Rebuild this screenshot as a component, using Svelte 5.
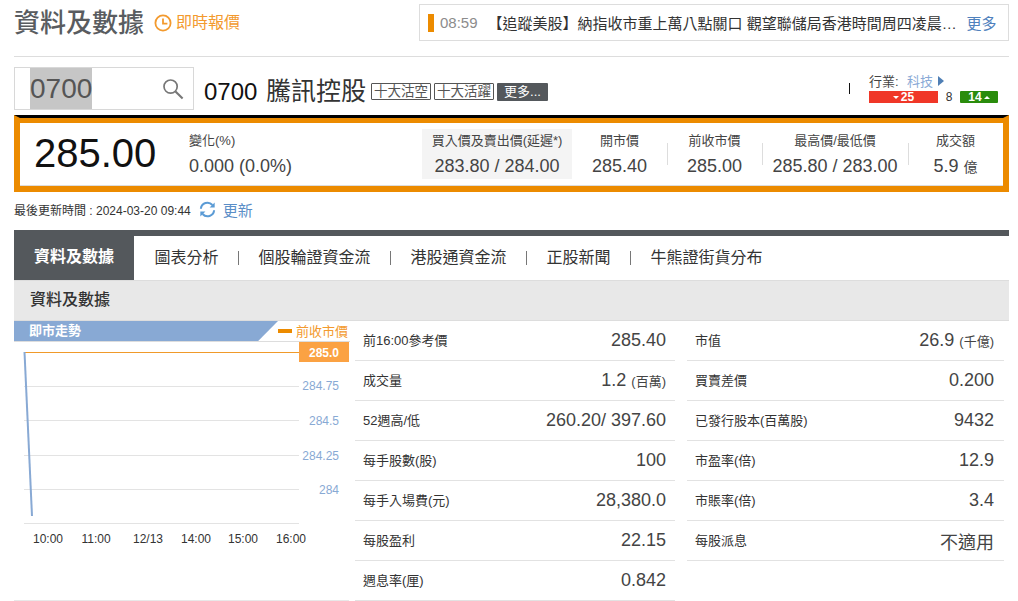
<script>
  const tabs = ['圖表分析', '個股輪證資金流', '港股通資金流', '正股新聞', '牛熊證街貨分布'];
  const leftRows = [
    ['前16:00參考價', '285.40', ''],
    ['成交量', '1.2', '(百萬)'],
    ['52週高/低', '260.20/ 397.60', ''],
    ['每手股數(股)', '100', ''],
    ['每手入場費(元)', '28,380.0', ''],
    ['每股盈利', '22.15', ''],
    ['週息率(厘)', '0.842', '']
  ];
  const rightRows = [
    ['市值', '26.9', '(千億)'],
    ['買賣差價', '0.200', ''],
    ['已發行股本(百萬股)', '9432', ''],
    ['市盈率(倍)', '12.9', ''],
    ['市賬率(倍)', '3.4', ''],
    ['每股派息', '不適用', '']
  ];
  const quotes = [
    { label: '開市價', value: '285.40', cls: 'q-open' },
    { label: '前收市價', value: '285.00', cls: 'q-prev' },
    { label: '最高價/最低價', value: '285.80 / 283.00', cls: 'q-high' }
  ];
  const grid = [386, 420, 455, 489, 523];
  const yLabels = [['284.75', 390], ['284.5', 425], ['284.25', 460], ['284', 494]];
  const xLabels = [['10:00', 48], ['11:00', 96], ['12/13', 148], ['14:00', 196], ['15:00', 243], ['16:00', 291]];
</script>

<div class="page">
  <header class="top">
    <h1>資料及數據</h1>
    <svg class="clock" viewBox="0 0 18 18" width="18" height="18" aria-hidden="true">
      <circle cx="9" cy="9" r="7.6" fill="none" stroke="#f39a2e" stroke-width="1.8" />
      <path d="M9 4.6V9.6H13.4" fill="none" stroke="#f39a2e" stroke-width="1.8" />
    </svg>
    <span class="realtime">即時報價</span>
    <div class="ticker">
      <i class="tick-bar"></i>
      <span class="tick-time">08:59</span>
      <span class="tick-text">【追蹤美股】納指收市重上萬八點關口 觀望聯儲局香港時間周四凌晨…</span>
      <span class="tick-more">更多</span>
    </div>
  </header>

  <section class="search-row">
    <div class="search">
      <span class="code">0700</span>
      <svg viewBox="0 0 22 22" width="22" height="22" aria-hidden="true">
        <circle cx="8.6" cy="8.6" r="6.6" fill="none" stroke="#777" stroke-width="1.7" />
        <path d="M13.5 13.5L20.6 20.6" stroke="#777" stroke-width="2.1" />
      </svg>
    </div>
    <div class="name"><b>0700</b> <span>騰訊控股</span></div>
    <span class="tag">十大沽空</span>
    <span class="tag">十大活躍</span>
    <span class="tag-more">更多...</span>
    <i class="pipe"></i>
    <div class="industry">
      <div class="ind-top">
        <span class="ind-label">行業:</span><span class="ind-name">科技</span><i class="ind-arrow"></i>
      </div>
      <div class="ind-bars">
        <span class="bar-red"><i class="tri-down"></i>25</span>
        <span class="bar-mid">8</span>
        <span class="bar-green">14<i class="tri-up"></i></span>
      </div>
    </div>
  </section>

  <section class="quote">
    <div class="price">285.00</div>
    <div class="change">
      <div class="q-label">變化(%)</div>
      <div class="q-value">0.000 (0.0%)</div>
    </div>
    <div class="q-cell q-bid">
      <div class="q-label">買入價及賣出價(延遲*)</div>
      <div class="q-value">283.80 / 284.00</div>
    </div>
    {#each quotes as q}
      <div class="q-cell {q.cls}">
        <div class="q-label">{q.label}</div>
        <div class="q-value">{q.value}</div>
      </div>
    {/each}
    <div class="q-cell q-vol">
      <div class="q-label">成交額</div>
      <div class="q-value">5.9 <small>億</small></div>
    </div>
  </section>

  <div class="updated">
    <span>最後更新時間 : 2024-03-20 09:44</span>
    <svg viewBox="0 0 18 18" width="17" height="17" aria-hidden="true">
      <path d="M2 8.2A7 7 0 0 1 14.2 4.2" fill="none" stroke="#5b9bd5" stroke-width="2.2" />
      <path d="M16 9.8A7 7 0 0 1 3.8 13.8" fill="none" stroke="#5b9bd5" stroke-width="2.2" />
      <path d="M16.6 1.6V7H11.2Z M1.4 16.4V11H6.8Z" fill="#5b9bd5" />
    </svg>
    <span class="refresh">更新</span>
  </div>

  <nav class="tabs">
    <span class="tab-active">資料及數據</span>
    {#each tabs as t, i}
      <span class="tab" class:first={i === 0} class:last={i === tabs.length - 1}>{t}</span>
    {/each}
  </nav>

  <div class="section-title">資料及數據</div>

  <div class="content">
    <div class="chart">
      <div class="chart-head">
        <span class="chart-title">即市走勢</span>
        <span class="legend"><i></i>前收市價</span>
      </div>
      <svg class="plot" viewBox="14 342 336 259" width="336" height="259" aria-hidden="true">
        {#each grid as y}
          <line x1="24" x2="299" y1={y + 0.5} y2={y + 0.5} stroke="#e3e3e3" />
        {/each}
        <line x1="24" x2="300" y1="352.5" y2="352.5" stroke="#f09a2a" />
        <line x1="24.5" x2="32" y1="352" y2="516" stroke="#88a9d4" stroke-width="2" />
        <rect x="299" y="342" width="50" height="20" fill="#fba243" />
        <text x="339" y="357" text-anchor="end" class="tag-text">285.0</text>
        {#each yLabels as [l, y]}
          <text x="339" {y} text-anchor="end" class="y-text">{l}</text>
        {/each}
        {#each xLabels as [l, x]}
          <text {x} y="543" text-anchor="middle" class="x-text">{l}</text>
        {/each}
        <line x1="14" x2="349" y1="600.5" y2="600.5" stroke="#e8e8e8" />
      </svg>
    </div>
    <div class="table">
      <div class="col">
        {#each leftRows as [l, v, u]}
          <div class="row"><span class="r-label">{l}</span><span class="r-value">{v}{#if u}<small>{u}</small>{/if}</span></div>
        {/each}
      </div>
      <div class="col col-right">
        {#each rightRows as [l, v, u]}
          <div class="row"><span class="r-label">{l}</span><span class="r-value">{v}{#if u}<small>{u}</small>{/if}</span></div>
        {/each}
      </div>
    </div>
  </div>
</div>

<style>
  :global(body) {
    margin: 0;
    background: #fff;
    overflow: hidden;
  }
  .page {
    width: 995px;
    height: 601px;
    margin-left: 14px;
    overflow: hidden;
    font-family: "Liberation Sans", "Noto Sans CJK TC", sans-serif;
    color: #333;
  }
  .top {
    height: 56px;
    box-sizing: content-box;
    border-bottom: 1px solid #ddd;
    display: flex;
    align-items: flex-start;
  }
  h1 {
    margin: 6px 0 0;
    font-size: 26px;
    line-height: 35px;
    font-weight: 500;
    color: #595c60;
    width: 140px;
    white-space: nowrap;
  }
  .clock {
    margin-top: 14px;
  }
  .realtime {
    margin: 11px 0 0 4px;
    font-size: 16px;
    line-height: 24px;
    color: #f39a2e;
    width: 243px;
  }
  .ticker {
    width: 590px;
    height: 37px;
    margin-top: 4px;
    box-sizing: border-box;
    border: 1px solid #ddd;
    display: flex;
    align-items: center;
    padding-left: 8px;
  }
  .tick-bar {
    width: 6px;
    height: 18px;
    background: #ec8b00;
    flex: none;
  }
  .tick-time {
    margin-left: 6px;
    font-size: 15px;
    color: #8c8c8c;
    flex: none;
  }
  .tick-text {
    margin-left: 10px;
    width: 470px;
    font-size: 15px;
    color: #333;
    white-space: nowrap;
    flex: none;
  }
  .tick-more {
    margin-left: 9px;
    font-size: 15px;
    color: #4f81bd;
    flex: none;
  }
  .search-row {
    height: 58px;
    display: flex;
    align-items: flex-start;
  }
  .search {
    margin-top: 10px;
    width: 180px;
    height: 43px;
    box-sizing: border-box;
    border: 1px solid #d8d8d8;
    display: flex;
    align-items: center;
    padding-left: 15px;
  }
  .code {
    background: #c6c6c6;
    color: #555;
    font-size: 28px;
    line-height: 41px;
    width: 62px;
    flex: none;
  }
  .search svg {
    margin-left: 70px;
    flex: none;
  }
  .name {
    margin: 17px 0 0 10px;
    font-size: 24px;
    line-height: 34px;
    color: #333;
    width: 167px;
    white-space: nowrap;
  }
  .name b {
    font-weight: 400;
    color: #111;
  }
  .name span {
    font-size: 25px;
    margin-left: 2px;
  }
  .tag {
    margin: 26px 3px 0 0;
    width: 60px;
    height: 17px;
    box-sizing: border-box;
    border: 1px solid #555;
    border-radius: 1px;
    font-size: 13.5px;
    line-height: 15px;
    text-align: center;
    color: #555;
    white-space: nowrap;
  }
  .tag-more {
    margin-top: 26px;
    width: 51px;
    height: 18px;
    background: #54585c;
    border-radius: 1px;
    color: #fff;
    font-size: 13px;
    line-height: 18px;
    text-align: center;
  }
  .pipe {
    margin: 26px 0 0 301px;
    width: 1px;
    height: 11px;
    background: #111;
    flex: none;
  }
  .industry {
    margin: 13px 0 0 19px;
    width: 130px;
  }
  .ind-top {
    height: 21px;
    display: flex;
    align-items: center;
    font-size: 13px;
  }
  .ind-label {
    width: 38px;
    color: #444;
  }
  .ind-name {
    color: #8aaad6;
    width: 31px;
  }
  .ind-arrow {
    border-left: 6px solid #4f7fb5;
    border-top: 5px solid transparent;
    border-bottom: 5px solid transparent;
  }
  .ind-bars {
    display: flex;
    height: 12px;
    font-size: 12px;
    line-height: 12px;
    font-weight: 700;
    color: #fff;
  }
  .bar-red {
    width: 69px;
    background: #f03728;
    display: flex;
    justify-content: center;
    align-items: center;
    gap: 2px;
  }
  .bar-mid {
    width: 22px;
    color: #333;
    font-weight: 400;
    text-align: center;
  }
  .bar-green {
    width: 38px;
    background: #2a8c0c;
    border-radius: 1px;
    display: flex;
    justify-content: center;
    align-items: center;
    gap: 2px;
  }
  .tri-down {
    border-top: 3px solid #fff;
    border-left: 3px solid transparent;
    border-right: 3px solid transparent;
  }
  .tri-up {
    border-bottom: 3px solid #fff;
    border-left: 3px solid transparent;
    border-right: 3px solid transparent;
  }
  .quote {
    height: 77px;
    box-sizing: border-box;
    border-top: 3px solid #000;
    display: flex;
    border-left: 6px solid #ec8b00;
    border-right: 6px solid #ec8b00;
    border-bottom: 6px solid #ec8b00;
    box-shadow: inset 0 5px 0 #ec8b00, inset 0 -1px 0 #ddd;
    padding-top: 5px;
  }
  .price {
    width: 169px;
    padding-left: 14px;
    box-sizing: border-box;
    font-size: 40px;
    line-height: 60px;
    color: #111;
  }
  .change {
    width: 233px;
    padding-top: 9px;
  }
  .q-label {
    font-size: 13px;
    line-height: 18px;
    color: #444;
    white-space: nowrap;
  }
  .q-value {
    margin-top: 5px;
    font-size: 18px;
    line-height: 22px;
    color: #444;
    white-space: nowrap;
  }
  .q-value small {
    font-size: 14px;
  }
  .q-cell {
    box-sizing: border-box;
    text-align: center;
    padding-top: 9px;
    position: relative;
    width: 95px;
  }
  .q-bid {
    width: 150px;
    height: 50px;
    margin-top: 6px;
    padding-top: 3px;
    background: #f4f4f4;
  }
  .q-high {
    width: 146px;
  }
  .q-prev::before,
  .q-high::before,
  .q-vol::before {
    content: "";
    position: absolute;
    left: 0;
    top: 20px;
    height: 22px;
    width: 1px;
    background: #ddd;
  }
  .updated {
    height: 38px;
    box-sizing: border-box;
    padding-bottom: 4px;
    display: flex;
    align-items: center;
    font-size: 12px;
    color: #333;
  }
  .updated svg {
    margin-left: 8px;
    flex: none;
  }
  .refresh {
    margin-left: 7px;
    font-size: 15px;
    color: #5b8ec7;
  }
  .tabs {
    height: 44px;
    box-sizing: content-box;
    border-top: 6px solid #54585c;
    border-bottom: 1px solid #ddd;
    display: flex;
    align-items: center;
    font-size: 16px;
    color: #333;
  }
  .tab-active {
    width: 120px;
    height: 44px;
    align-self: flex-start;
    background: #54585c;
    color: #fff;
    font-size: 16px;
    font-weight: 700;
    line-height: 42px;
    text-align: center;
    flex: none;
  }
  .tab {
    padding: 0 19.5px;
    height: 14px;
    line-height: 14px;
    border-right: 1px solid #777;
    white-space: nowrap;
  }
  .tab.first {
    margin-left: 1px;
  }
  .tab.last {
    border-right: 0;
  }
  .section-title {
    height: 39px;
    background: #e8e8e8;
    padding-left: 16px;
    font-size: 16px;
    font-weight: 500;
    line-height: 37px;
    color: #333;
    border-bottom: 1px solid #ddd;
    box-sizing: content-box;
  }
  .content {
    display: flex;
    align-items: flex-start;
  }
  .chart {
    width: 336px;
    flex: none;
  }
  .chart-head {
    display: flex;
    height: 20px;
    align-items: center;
    border-bottom: 1px solid #ddd;
  }
  .chart-title {
    width: 264px;
    height: 20px;
    box-sizing: border-box;
    padding-left: 15px;
    background: #88a9d4;
    clip-path: polygon(0 0, 100% 0, 92.5% 100%, 0 100%);
    color: #fff;
    font-size: 13px;
    font-weight: 700;
    line-height: 19px;
    flex: none;
  }
  .legend {
    display: flex;
    align-items: center;
    font-size: 13px;
    color: #f39a2e;
    white-space: nowrap;
    margin-top: -1px;
  }
  .legend i {
    width: 14px;
    height: 4px;
    margin: 0 4px 0 0;
    background: #ec8b00;
  }
  .plot {
    display: block;
  }
  .tag-text {
    font-size: 12px;
    font-weight: 700;
    fill: #fff;
  }
  .y-text {
    font-size: 12px;
    fill: #88a9d4;
  }
  .x-text {
    font-size: 12px;
    fill: #333;
  }
  .table {
    margin-left: 5px;
    display: flex;
    gap: 12px;
  }
  .col {
    width: 320px;
  }
  .col-right {
    width: 317px;
  }
  .row {
    height: 40px;
    box-sizing: border-box;
    border-bottom: 1px solid #e2e2e2;
    display: flex;
    justify-content: space-between;
    align-items: center;
    padding: 0 9px;
  }
  .col-right .row {
    padding-right: 10px;
  }
  .r-label {
    font-size: 13px;
    color: #333;
    margin: -2px 0 0 -1px;
  }
  .r-value {
    font-size: 18px;
    color: #444;
  }
  .r-value small {
    font-size: 13px;
    margin-left: 5px;
  }
</style>
